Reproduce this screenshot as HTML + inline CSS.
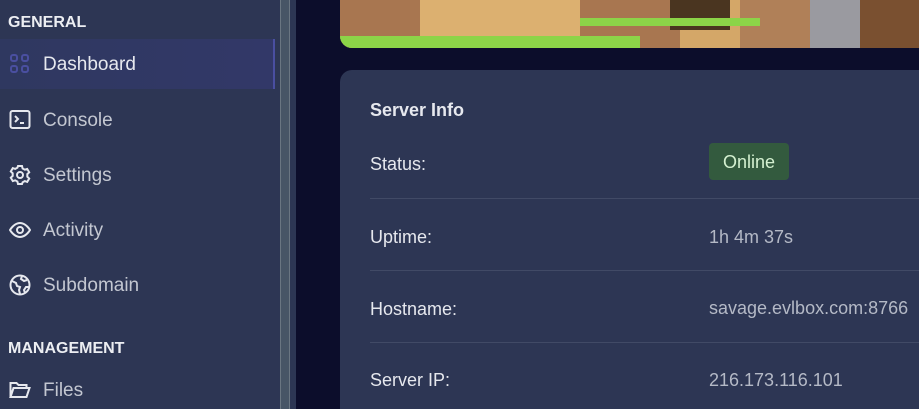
<!DOCTYPE html>
<html><head><style>
*{margin:0;padding:0;box-sizing:border-box}
html,body{width:919px;height:409px;overflow:hidden}
body{background:#0c0d2b;font-family:"Liberation Sans",sans-serif;position:relative}
.sb{position:absolute;left:0;top:0;width:280px;height:409px;background:#2d3654}
.sc{position:absolute;left:280px;top:0;width:10px;height:409px;background:#475566;border-left:1px solid #6a7682;border-right:1px solid #6a7682}
.sc2{position:absolute;left:290px;top:0;width:6px;height:409px;background:#2d3654}
.h{position:absolute;left:8px;color:#eceef2;font-weight:bold;font-size:16px}
.it{position:absolute;left:0;width:275px;height:50px;color:#c3c7d1;font-size:19px;line-height:52px;padding-left:43px}
.it svg{position:absolute;left:9px;top:14px}
.act{background:linear-gradient(90deg,#2f3860,#323868);border-right:2px solid #4a4fa0;color:#e6e8ee}
.img{position:absolute;left:340px;top:0;width:579px;height:48px;border-bottom-left-radius:12px;overflow:hidden;background:#d4a768}
.card{position:absolute;left:340px;top:70px;width:600px;height:339px;background:#2d3654;border-radius:12px 12px 0 0}
.t{position:absolute;color:#e6e8ee;font-size:18px}
.l{position:absolute;left:370px;color:#e6e8ee;font-size:18px}
.v{position:absolute;left:709px;color:#b4b9c6;font-size:18px;white-space:nowrap}
.hr{position:absolute;left:370px;width:560px;height:1px;background:#414a66}
</style></head><body>
<div class="sb"></div><div class="sc"></div><div class="sc2"></div>
<div class="h" style="top:14px">GENERAL</div>
<div class="it act" style="top:39px"><svg width="22" height="22" viewBox="0 0 22 22" fill="none" stroke="#4a4fa0" stroke-width="2"><rect x="2" y="2" width="6" height="6" rx="2"/><rect x="13" y="2" width="6" height="6" rx="2"/><rect x="2" y="13" width="6" height="6" rx="2"/><rect x="13" y="13" width="6" height="6" rx="2"/></svg>Dashboard</div>
<div class="it" style="top:95px"><svg width="22" height="22" viewBox="0 0 22 22" fill="none" stroke="#e6e8ee" stroke-width="2"><rect x="1.5" y="2" width="19" height="17" rx="2"/><path d="M6 7l3 3-3 3M11 14h4"/></svg>Console</div>
<div class="it" style="top:150px"><svg width="22" height="22" viewBox="0 0 22 22" fill="none" stroke="#e6e8ee" stroke-width="2"><circle cx="11" cy="11" r="3"/><path d="M9 2h4l.6 2.5 2.2 1.2 2.4-.8 2 3.4-1.9 1.8v2.6l1.9 1.8-2 3.4-2.4-.8-2.2 1.2L13 20H9l-.6-2.5-2.2-1.2-2.4.8-2-3.4 1.9-1.8V9.3L1.8 7.5l2-3.4 2.4.8 2.2-1.2z"/></svg>Settings</div>
<div class="it" style="top:205px"><svg width="22" height="22" viewBox="0 0 22 22" fill="none" stroke="#e6e8ee" stroke-width="2"><path d="M1 11s4-7 10-7 10 7 10 7-4 7-10 7S1 11 1 11z"/><circle cx="11" cy="11" r="3"/></svg>Activity</div>
<div class="it" style="top:260px"><svg width="22" height="22" viewBox="0 0 22 22" fill="none" stroke="#e6e8ee" stroke-width="2"><circle cx="11" cy="11" r="9.5"/><path d="M3 7l4 2 1 3 3 1-1 3 1 4M13 2l-1 3 3 2 3-1M20 13l-3 0-2 3 1 3"/></svg>Subdomain</div>
<div class="h" style="top:340px">MANAGEMENT</div>
<div class="it" style="top:365px"><svg width="22" height="22" viewBox="0 0 22 22" fill="none" stroke="#e6e8ee" stroke-width="2"><path d="M1.5 18V4h6l2 2h8v3M1.5 18l3-9h16l-3 9z"/></svg>Files</div>
<div class="img">
<div style="position:absolute;left:0;top:0;width:80px;height:48px;background:#a87650"></div>
<div style="position:absolute;left:80px;top:0;width:160px;height:48px;background:#dcb070"></div>
<div style="position:absolute;left:240px;top:0;width:100px;height:48px;background:#a87650"></div>
<div style="position:absolute;left:330px;top:0;width:60px;height:30px;background:#4a3520"></div>
<div style="position:absolute;left:400px;top:0;width:80px;height:48px;background:#b08058"></div>
<div style="position:absolute;left:470px;top:0;width:60px;height:48px;background:#9a9aa0"></div>
<div style="position:absolute;left:520px;top:0;width:59px;height:48px;background:#7a5030"></div>
<div style="position:absolute;left:0;top:36px;width:300px;height:12px;background:#8cd448"></div>
<div style="position:absolute;left:240px;top:18px;width:180px;height:8px;background:#8cd448"></div>
</div>
<div class="card"></div>
<div class="t" style="left:370px;top:100px;font-weight:bold">Server Info</div>
<div class="l" style="top:154px">Status:</div>
<div style="position:absolute;left:709px;top:143px;width:80px;height:37px;background:#335a3e;border-radius:4px;color:#d4f0d0;font-size:18px;line-height:39px;text-align:center">Online</div>
<div class="hr" style="top:198px"></div>
<div class="l" style="top:227px">Uptime:</div><div class="v" style="top:227px">1h 4m 37s</div>
<div class="hr" style="top:270px"></div>
<div class="l" style="top:299px">Hostname:</div><div class="v" style="top:298px">savage.evlbox.com:8766</div>
<div class="hr" style="top:342px"></div>
<div class="l" style="top:370px">Server IP:</div><div class="v" style="top:370px">216.173.116.101</div>
</body></html>
